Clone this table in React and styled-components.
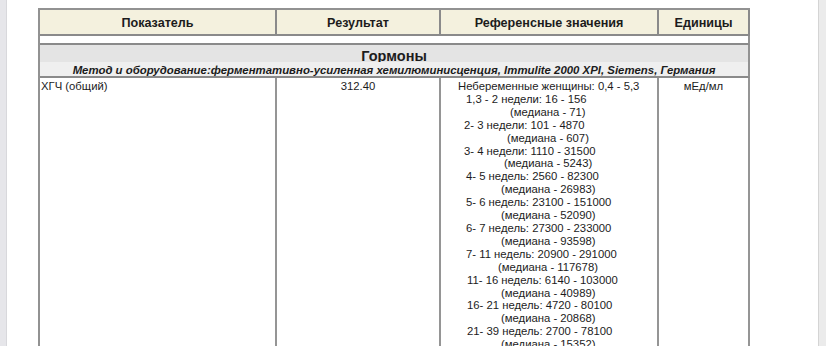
import React from "react";
import styled, { createGlobalStyle } from "styled-components";

const Global = createGlobalStyle`
  html, body { margin: 0; padding: 0; background: #fff; }
  body { width: 826px; height: 346px; overflow: hidden; font-family: "Liberation Sans", Arial, sans-serif; color: #1c1c1c; }
  #root { height: 346px; }
`;

const Viewer = styled.div`
  display: flex;
  height: 346px;
  width: 826px;
  overflow: hidden;
`;

const SideStrip = styled.div`
  flex: none;
  width: ${(p) => p.$w}px;
  background: ${(p) => p.$bg};
  border-${(p) => p.$edge}: 1px solid ${(p) => p.$line};
`;

const Page = styled.div`
  flex: 1;
  background: #fff;
  padding: 8px 0 0 31px;
  overflow: hidden;
`;

const Grid = styled.div`
  display: grid;
  grid-template-columns: 237px 164px 218px 91px;
  width: 712px;
  border-left: 2px solid #929292;
  border-top: 2px solid #929292;
  box-sizing: border-box;
`;

const HeadCell = styled.div`
  box-sizing: border-box;
  height: 26px;
  background: #f4f1de;
  border-right: 2px solid #8a8a8a;
  border-bottom: 2px solid #8a8a8a;
  display: flex;
  align-items: center;
  justify-content: center;
  font-weight: bold;
  font-size: 12.6px;
  padding-top: 1px;
`;

const Spacer = styled.div`
  grid-column: 1 / -1;
  height: 9px;
  box-sizing: border-box;
  border-right: 2px solid #929292;
  border-bottom: 2px solid #8a8a8a;
`;

const Section = styled.div`
  grid-column: 1 / -1;
  height: 17px;
  background: #e4e4e4;
  border-right: 2px solid #929292;
  box-sizing: border-box;
  display: flex;
  align-items: center;
  justify-content: center;
  font-weight: bold;
  font-size: 14.5px;
  padding-top: 4px;
`;

const Method = styled.div`
  grid-column: 1 / -1;
  height: 16px;
  background: #efefef;
  border-right: 2px solid #929292;
  border-bottom: 2px solid #8a8a8a;
  box-sizing: border-box;
  display: flex;
  align-items: center;
  justify-content: center;
  font-weight: bold;
  font-style: italic;
  font-size: 11.4px;
  padding-top: 1px;
  white-space: nowrap;
`;

const Cell = styled.div`
  box-sizing: border-box;
  border-right: 2px solid #959595;
  font-size: 11.3px;
  line-height: 12.9px;
  padding: 2px 0 0 ${(p) => (p.$align === "left" ? "1px" : "0")};
  text-align: ${(p) => p.$align || "center"};
  min-height: 300px;
`;

const RefLine = styled.div`
  text-align: left;
  white-space: nowrap;
  padding-left: ${(p) => p.$indent}px;
`;

const refs = [
  ["Небеременные женщины: 0,4 - 5,3", 17],
  ["1,3 - 2 недели: 16 - 156", 25],
  ["(медиана - 71)", 69],
  ["2- 3 недели: 101 - 4870", 23],
  ["(медиана - 607)", 66],
  ["3- 4 недели: 1110 - 31500", 23],
  ["(медиана - 5243)", 63],
  ["4- 5 недель: 2560 - 82300", 25],
  ["(медиана - 26983)", 60],
  ["5- 6 недель: 23100 - 151000", 25],
  ["(медиана - 52090)", 60],
  ["6- 7 недель: 27300 - 233000", 25],
  ["(медиана - 93598)", 60],
  ["7- 11 недель: 20900 - 291000", 25],
  ["(медиана - 117678)", 57],
  ["11- 16 недель: 6140 - 103000", 26],
  ["(медиана - 40989)", 60],
  ["16- 21 недель: 4720 - 80100", 26],
  ["(медиана - 20868)", 60],
  ["21- 39 недель: 2700 - 78100", 26],
  ["(медиана - 15352)", 60],
];

export default function App() {
  return (
    <>
      <Global />
      <Viewer>
        <SideStrip $w={6} $bg="#e6e6ea" $edge="right" $line="#d8d8dc" />
        <Page>
          <Grid>
            <HeadCell>Показатель</HeadCell>
            <HeadCell>Результат</HeadCell>
            <HeadCell>Референсные значения</HeadCell>
            <HeadCell>Единицы</HeadCell>
            <Spacer />
            <Section>Гормоны</Section>
            <Method>
              Метод и оборудование:ферментативно-усиленная хемилюминисценция, Immulite 2000 XPI, Siemens, Германия
            </Method>
            <Cell $align="left">ХГЧ (общий)</Cell>
            <Cell>312.40</Cell>
            <Cell>
              {refs.map(([t, i]) => (
                <RefLine key={t} $indent={i}>
                  {t}
                </RefLine>
              ))}
            </Cell>
            <Cell>мЕд/мл</Cell>
          </Grid>
        </Page>
        <SideStrip $w={7} $bg="#ebebeb" $edge="left" $line="#d4d4d4" />
      </Viewer>
    </>
  );
}
